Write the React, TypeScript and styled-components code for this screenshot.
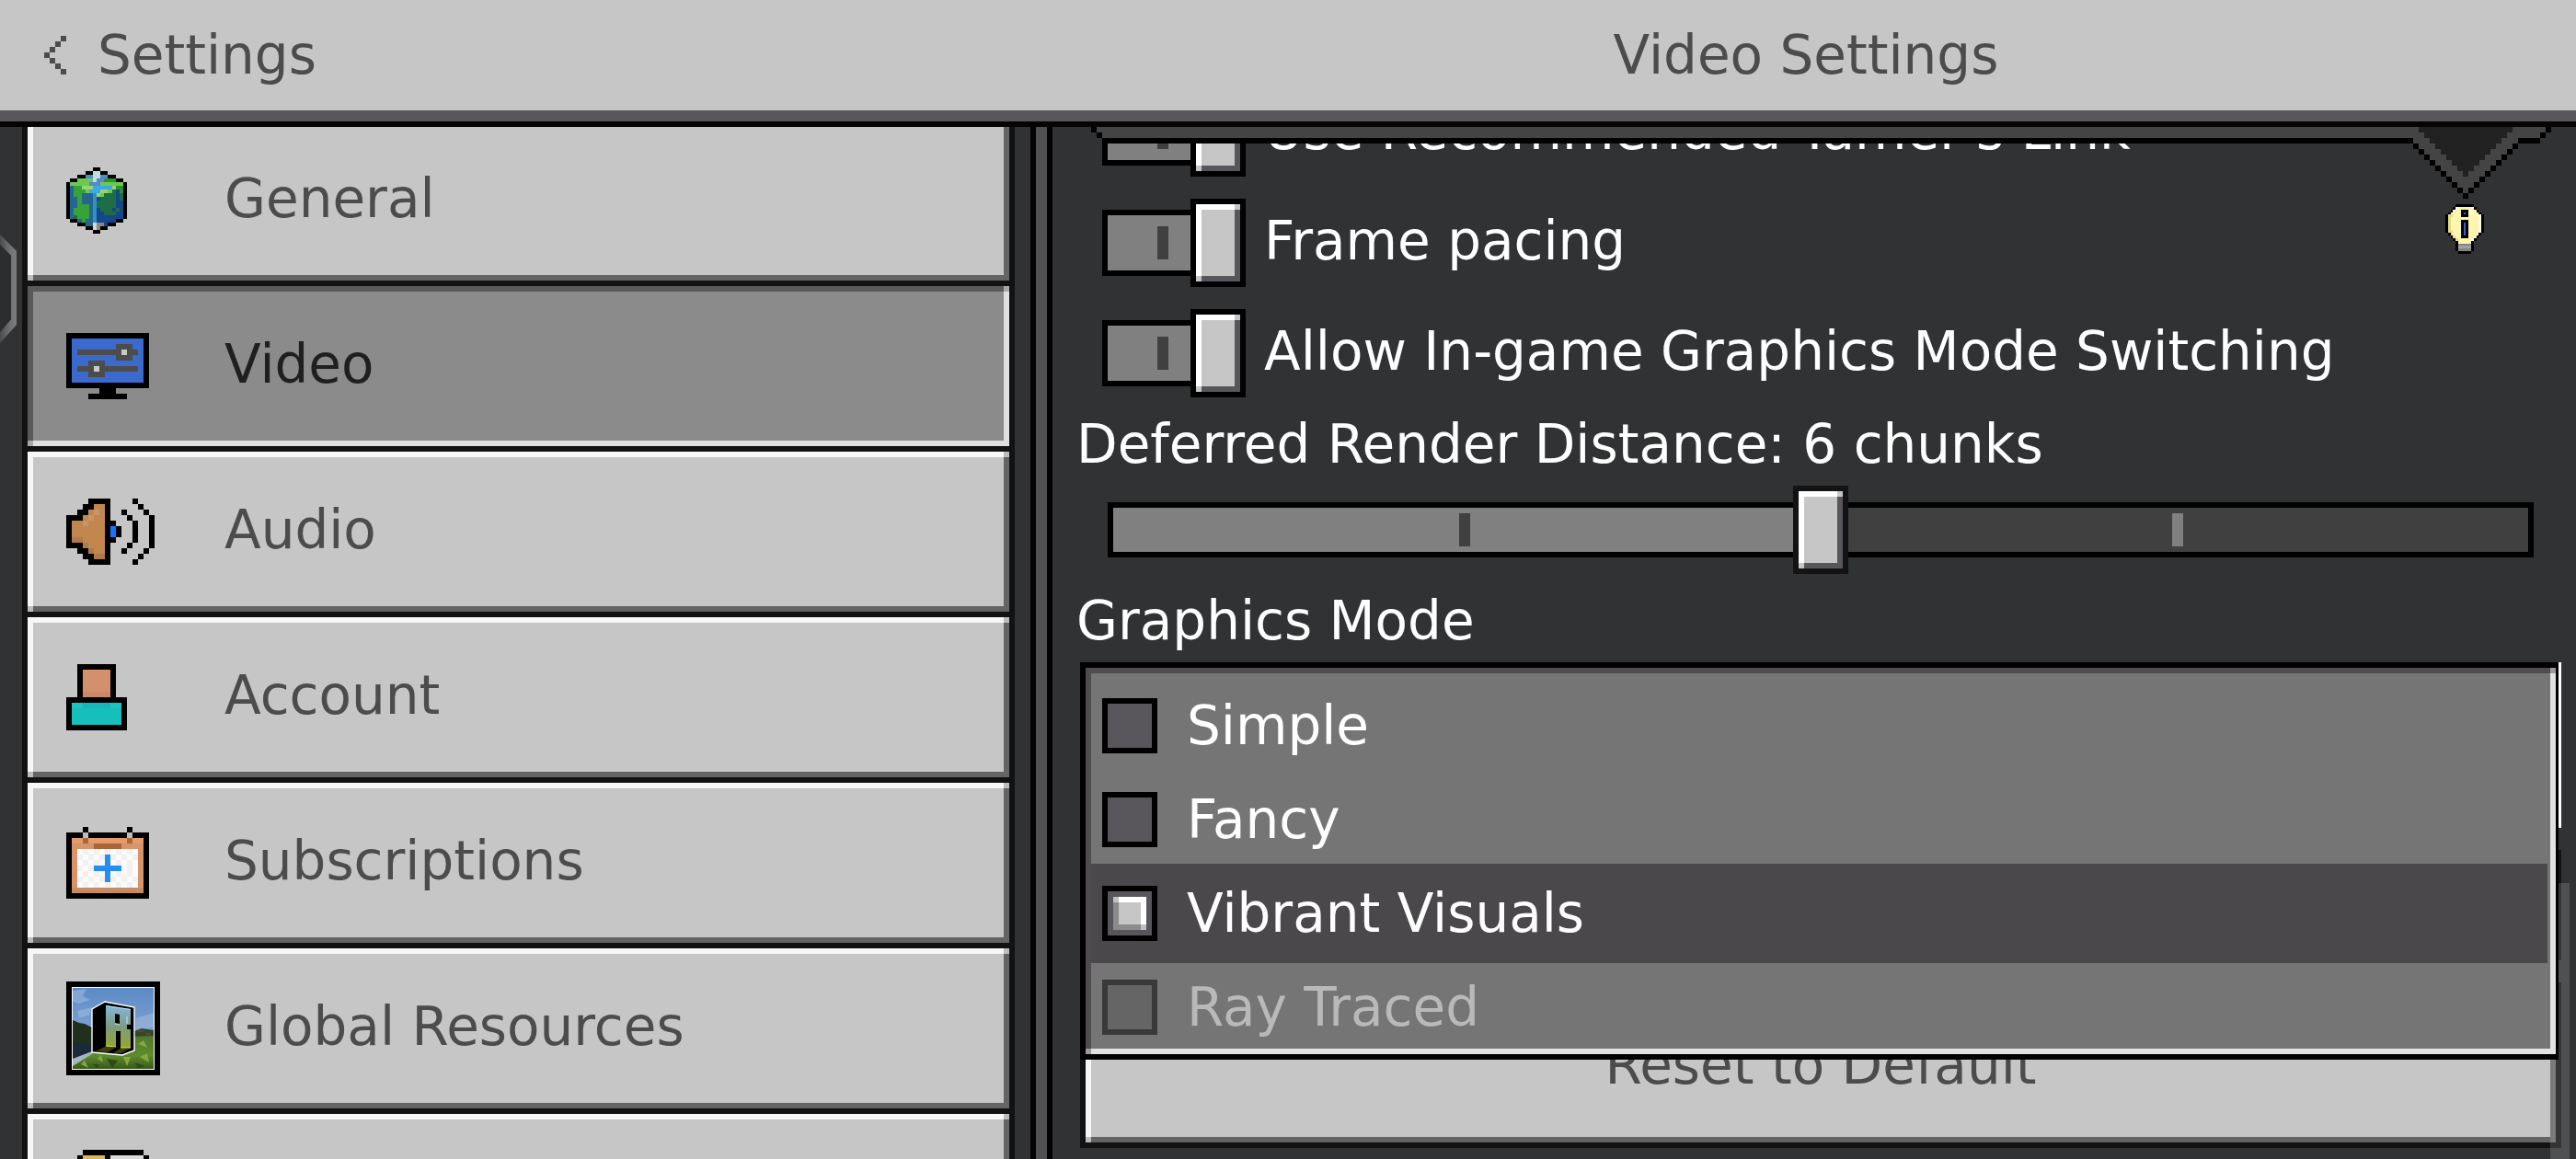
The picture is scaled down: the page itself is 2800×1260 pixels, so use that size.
import React, { useState } from "react";
import styled, { createGlobalStyle, css } from "styled-components";

const GlobalStyle = createGlobalStyle`
  *, *::before, *::after { box-sizing: border-box; }
  body {
    margin: 0;
    background: #313233;
    font-family: "DejaVu Sans", sans-serif;
    font-size: 58px;
    line-height: 60px;
    overflow: hidden;
  }
  button, input { font: inherit; margin: 0; border-radius: 0; }
`;

const px = (color: string, place: string, size: string) =>
  `linear-gradient(${color}, ${color}) ${place} / ${size} no-repeat`;

/* Two-tone 6px bevel with blended pixels where light meets dark. */
const bevel = (topLeft: string, bottomRight: string, blend: string, fill: string) => css`
  background:
    ${px(blend, "left bottom", "6px 6px")},
    ${px(blend, "right top", "6px 6px")},
    ${px(topLeft, "left top", "6px 100%")},
    ${px(topLeft, "left top", "100% 6px")},
    ${px(bottomRight, "right top", "6px 100%")},
    ${px(bottomRight, "left bottom", "100% 6px")},
    ${fill};
  background-origin: padding-box;
  background-clip: padding-box;
`;

const raised = bevel("#f7f7f7", "#646464", "#bcbcbc", "#c6c6c6");
const pressed = bevel("#5a595a", "#dfdfdf", "#a8a8a8", "#8b8b8b");
const knob = bevel("#ffffff", "#58565a", "#c6c6c6", "#c6c6c6");

/* ---------- page frame ---------- */

const Page = styled.div`
  display: flex;
  flex-direction: column;
  height: 100vh;
`;

const Header = styled.header`
  display: flex;
  align-items: center;
  height: 132px;
  flex: none;
  background: #c6c6c6;
  border-bottom: 12px solid #58565a;
  color: #4c4c4c;
`;

const BackArea = styled.div`
  width: 40%;
  padding-left: 48px;
`;

const BackButton = styled.button`
  display: flex;
  align-items: center;
  gap: 34px;
  padding: 0;
  border: 0;
  background: none;
  color: inherit;
`;

const Title = styled.h1`
  flex: 1;
  margin: 0;
  padding-left: 6px;
  text-align: center;
  font-size: inherit;
  font-weight: 400;
`;

const Body = styled.div`
  display: flex;
  flex: 1;
  min-height: 0;
  border-top: 6px solid #050505;
`;

/* ---------- sidebar ---------- */

const Sidebar = styled.nav`
  display: flex;
  align-items: flex-start;
  width: 40%;
  padding-right: 17px;
  overflow: hidden;
`;

const Gutter = styled.div`
  width: 24px;
  flex: none;
  padding-top: 117px;
`;

const SectionList = styled.div`
  display: flex;
  flex-direction: column;
  flex: 1;
  gap: 6px;
  margin-top: -13px;
  padding: 6px;
  background: #121212;
`;

const SectionButton = styled.button<{ $active: boolean }>`
  display: flex;
  align-items: center;
  height: 174px;
  padding: 0 0 0 42px;
  border: 0;
  text-align: left;
  color: ${(p) => (p.$active ? "#1f1f1f" : "#4c4c4c")};
  ${(p) => (p.$active ? pressed : raised)}
`;

const IconSlot = styled.span`
  display: flex;
  width: 172px;
`;

const Caption = styled.span`
  padding-bottom: 4px;
`;

const Divider = styled.div`
  flex: none;
  width: 24px;
  border: solid #030303;
  border-width: 0 6px;
  background: #505052;
`;

/* ---------- video panel ---------- */

const Panel = styled.main`
  position: relative;
  flex: 1;
  min-width: 0;
  overflow: hidden;
`;

const Scroller = styled.div`
  display: flex;
  flex-direction: column;
  margin-top: -54px;
  padding: 0 16px 0 30px;
  color: #ffffff;
`;

const ToggleRow = styled.label`
  display: flex;
  align-items: center;
  gap: 20px;
  height: 120px;
  padding-left: 24px;
`;

const Toggle = styled.input`
  appearance: none;
  display: flex;
  align-items: center;
  width: 156px;
  height: 96px;
  flex: none;

  &::before {
    content: "";
    flex: 1;
    height: 72px;
    border: 6px solid #000000;
    border-right: 0;
    background: ${px("#404040", "54px center", "12px 36px")}, #808080;
  }
  &::after {
    content: "";
    width: 60px;
    height: 96px;
    border: 6px solid #000000;
    ${knob}
  }
`;

const FieldLabel = styled.label`
  height: 78px;
  margin-left: -4px;
  line-height: 78px;
`;

const Slider = styled.input`
  appearance: none;
  height: 96px;
  margin: 6px 30px 12px;
  background: none;

  &::-webkit-slider-runnable-track {
    height: 60px;
    border: 6px solid #000000;
    background:
      ${px("#404040", "calc(25% - 6px) center", "12px 36px")},
      ${px("#808080", "calc(75% + 6px) center", "12px 36px")},
      ${px("#808080", "left top", "50% 100%")},
      #404040;
  }
  &::-webkit-slider-thumb {
    appearance: none;
    width: 60px;
    height: 96px;
    margin-top: -24px;
    border: 6px solid #131313;
    ${knob}
  }
`;

const Dropdown = styled.div`
  position: relative;
  margin-top: 6px;
  z-index: 2;
`;

const DropdownButton = styled.button`
  display: block;
  width: 100%;
  height: 180px;
  border: 0;
  background: #ffffff;
`;

const Menu = styled.div`
  position: absolute;
  top: 0;
  left: 0;
  right: 3px;
  padding: 12px 9px 6px 6px;
  border: 6px solid #000000;
  border-right-width: 3px;
  ${bevel("#4f4c50", "#e2e2e2", "#9c9a9c", "#757575")}
`;

const Option = styled.label<{ $selected: boolean; $disabled: boolean }>`
  display: flex;
  gap: 32px;
  padding: 21px 0 21px 12px;
  color: ${(p) => (p.$disabled ? "#b9b9b9" : "#ffffff")};
  ${(p) =>
    p.$selected &&
    css`
      background: #4a484b;
      box-shadow: 0 3px #4a484b, 0 -3px #4a484b;
    `}
  &:last-child { padding-bottom: 15px; }
`;

const Radio = styled.input`
  appearance: none;
  width: 60px;
  height: 60px;
  flex: none;
  padding: 6px;
  border: 6px solid #000000;
  background: #58565a;

  &:disabled {
    border-color: #393939;
    background: #656565;
  }
  &:checked::before {
    content: "";
    display: block;
    width: 36px;
    height: 36px;
    background:
      ${px("#c0c0c0", "left top", "6px 6px")},
      ${px("#c0c0c0", "right bottom", "6px 6px")},
      ${px("#ffffff", "left top", "100% 6px")},
      ${px("#ffffff", "right top", "6px 100%")},
      ${px("#8b8b8b", "left top", "6px 100%")},
      ${px("#8b8b8b", "left bottom", "100% 6px")},
      #c6c6c6;
  }
`;

const PlainButton = styled.button`
  height: 120px;
  margin-top: 24px;
  border: 0;
  background: #141414;
`;

const ResetButton = styled.button`
  height: 180px;
  margin-top: 24px;
  padding: 0;
  border: 6px solid #121212;
  color: #4c4c4c;
  ${raised}
`;

const ScrollThumb = styled.div`
  position: absolute;
  top: 822px;
  right: 7px;
  bottom: 0;
  width: 21px;
  z-index: 1;
  background: rgba(255, 255, 255, 0.15);
`;

const HintBubble = styled.div`
  position: absolute;
  top: 0;
  left: 42px;
  right: 27px;
  z-index: 3;
  display: flex;
  align-items: flex-start;
`;

const HintEdge = styled.div`
  flex: 1;
  height: 18px;
  background: #444444;
  border-bottom: 6px solid #000000;
`;

const HintBulb = styled.div`
  position: absolute;
  top: 84px;
  right: 100px;
  display: flex;
`;

/* ---------- pixel drawings ---------- */

type Palette = Record<string, string>;

function PixelArt({ rows, colors, width, height }: { rows: string[]; colors: Palette; width: number; height: number }) {
  const cells: React.ReactElement[] = [];
  rows.forEach((row, y) => {
    let x = 0;
    while (x < row.length) {
      let end = x + 1;
      while (end < row.length && row[end] === row[x]) end++;
      if (colors[row[x]]) {
        cells.push(<rect key={`${x}-${y}`} x={x} y={y} width={end - x} height={1} fill={colors[row[x]]} />);
      }
      x = end;
    }
  });
  return (
    <svg
      width={width}
      height={height}
      viewBox={`0 0 ${rows[0].length} ${rows.length}`}
      preserveAspectRatio="none"
      shapeRendering="crispEdges"
      aria-hidden="true"
    >
      {cells}
    </svg>
  );
}

const GLOBE = [
  "       kk       ",
  "     kkppkk     ",
  "   kkbbppbbkk   ",
  " kkLLLLpbbDDDkk ",
  "kLLLLLbbbLLLLLLk",
  "ktggyyycccccyDDk",
  "ktgggLcccyyLdnDk",
  "ktggtttCyLdddndk",
  "kttgtttCnddddndk",
  "kttgtttCdddddnnk",
  "kttgggtCdddddnnk",
  "ktggggtCndddndnk",
  "ktggggtCnndddnnk",
  "ktdgggtCnnnnnnnk",
  " kktgttCnnnnnkk ",
  "   kkttwaankk   ",
  "     kkwakk     ",
  "       kk       ",
];
const GLOBE_COLORS: Palette = {
  k: "#000", p: "#c3dcda", b: "#5487d0", L: "#6cc94f", D: "#2a9233", t: "#24668f", g: "#35a23a",
  y: "#9bd26c", c: "#3ba9e6", C: "#338fc4", d: "#1d6e46", n: "#12478a", w: "#d6d6d6", a: "#8d8782",
};

const MONITOR = [
  "kkkkkkkkkkkkkkk",
  "kbbbbbbbbbbbbbk",
  "kbbbbbbbbgggbbk",
  "kbggggggggwggbk",
  "kbbbbbbbbgggbbk",
  "kbbbgggbbbbbbbk",
  "kbgggwgggggggbk",
  "kbbbgggbbbbbbbk",
  "kbbbbbbbbbbbbbk",
  "kkkkkkkkkkkkkkk",
  "      kkk      ",
  "    kkkkkkk    ",
];
const MONITOR_COLORS: Palette = { k: "#000", b: "#3a6acd", g: "#4c4c4c", w: "#c9c9c9" };

const SPEAKER = [
  "    kkkk    k   ",
  "   kkook     k  ",
  "  kkohok  k   k ",
  "kkkohook   k   k",
  "koohoookk   k  k",
  "kooooookBk  k  k",
  "kooooookBk  k  k",
  "kssooookk   k  k",
  "kkksoook   k   k",
  "  kksook  k   k ",
  "   kkssk     k  ",
  "    kkkk    k   ",
];
const SPEAKER_COLORS: Palette = { k: "#000", o: "#c1874f", h: "#c89469", s: "#af7a48", B: "#1673ff" };

const PERSON = [
  "  kkkkkkk  ",
  "  ksssssk  ",
  "  ksssssk  ",
  "  ksssssk  ",
  "  ksssssk  ",
  "  kdddddk  ",
  "kkkkkkkkkkk",
  "kllTTTTTllk",
  "ktttttttttk",
  "ktttttttttk",
  "ktttttttttk",
  "kkkkkkkkkkk",
];
const PERSON_COLORS: Palette = { k: "#000", s: "#d3906d", d: "#cb8a66", l: "#19c4c1", T: "#17b8b6", t: "#16bfbc" };

const CALENDAR = [
  "   k       k   ",
  "kkkakkkkkkkakkk",
  "kOObOOOOOOObOOk",
  "koooobbbbbooook",
  "kowvwvwvwvwvwok",
  "kovwvwvBvwvwvok",
  "kowvwvwBwvwvwok",
  "kovwvBBBBBwvwok",
  "kowvwvwBwvwvwok",
  "kovwvwvBvwvwvok",
  "kowvwvwvwvwvwok",
  "kdddddddddddddk",
  "kkkkkkkkkkkkkkk",
];
const CALENDAR_COLORS: Palette = {
  k: "#000", a: "#bdbdbd", O: "#e39b6c", b: "#ab6538", o: "#d5946a", w: "#fbfbfb", v: "#f3f1f0", B: "#258ff0", d: "#c58b64",
};

const STORAGE = [
  "   kkkkkkkkkkk   ",
  ...Array.from({ length: 14 }, () => "  kggggkwwwwwwk  "),
  "   kkkkkkkkkkk   ",
];
const STORAGE_COLORS: Palette = { k: "#000", g: "#dbb559", w: "#dadada" };

const BULB = [
  "    kkkkkkk    ",
  "   kwyyyyyyk   ",
  "  kwyykkkwwyk  ",
  " kwyyykBkywyyk ",
  "kssyyykkkyyyywk",
  "ksyyyyyyyyyyywk",
  "ksyyyykkkyyyywk",
  "ksyyyykBkyyyywk",
  "ksyyyykBkyyyywk",
  "ksyyyykBkyyyywk",
  "kssyyykBkyyyywk",
  " ksyyykBkyyywk ",
  "  ksyykkkyyyk  ",
  "   ksyyyyywk   ",
  "    kyyyyyk    ",
  "    kdddddk    ",
  "    kgggggk    ",
  "    kdddddk    ",
  "     kkkkk     ",
];
const BULB_COLORS: Palette = { k: "#000", y: "#fff6ae", s: "#e2dc85", w: "#fffce6", B: "#3d62c9", g: "#a0a0a0", d: "#858585" };

/* The hint bubble's stepped left corner and its pointed tail. */
const BUBBLE_LEFT = ["kg", " k", "  "];
const BUBBLE_TAIL = Array.from({ length: 13 }, (_, r) =>
  Array.from({ length: 25 }, (_, x) => {
    if (x > r && x < 18 - r) return "d";
    if (r < 2) return x < 24 - r ? "g" : x === 24 - r ? "k" : " ";
    if (r === 2) return x < 19 ? "g" : x < 23 ? "k" : " ";
    if (x === r - 3 || x === 21 - r) return "k";
    return x > r - 3 && x < 21 - r ? "g" : " ";
  }).join("")
);
const BUBBLE_COLORS: Palette = { k: "#000", g: "#444444", d: "#212121" };

const CHEVRON = ["   k", "  k ", " k  ", "k   ", " k  ", "  k ", "   k"];

function EdgeHandle() {
  return (
    <svg width="24" height="118" viewBox="0 0 24 118" aria-hidden="true">
      <defs>
        <linearGradient id="handle" x1="0" x2="1" y1="0" y2="0">
          <stop offset="0" stopColor="#4a4b4c" />
          <stop offset="0.6" stopColor="#707173" />
          <stop offset="1" stopColor="#7c7d7f" />
        </linearGradient>
      </defs>
      <path d="M0 0 L18 18 V98 L0 118 V106 L12 92 V23 L0 11 Z" fill="url(#handle)" />
      <path d="M0 11 L12 23 V92 L0 106 Z" fill="#2c2d2e" />
    </svg>
  );
}

function ResourcesIcon() {
  return (
    <svg width="102" height="102" viewBox="0 0 102 102" aria-hidden="true">
      <defs>
        <linearGradient id="sky" x1="0" x2="0" y1="0" y2="1">
          <stop offset="0" stopColor="#5b8ac4" />
          <stop offset="0.5" stopColor="#7ba1d2" />
          <stop offset="1" stopColor="#a9c0e0" />
        </linearGradient>
        <linearGradient id="grass" x1="0" x2="0" y1="0" y2="1">
          <stop offset="0" stopColor="#4f7a2c" />
          <stop offset="0.6" stopColor="#5f8a2c" />
          <stop offset="1" stopColor="#39591c" />
        </linearGradient>
        <linearGradient id="face" x1="0" x2="0" y1="0" y2="1">
          <stop offset="0" stopColor="#86b8dc" />
          <stop offset="0.5" stopColor="#7c9c82" />
          <stop offset="1" stopColor="#97a52c" />
        </linearGradient>
      </defs>
      <rect width="102" height="102" fill="#000" />
      <rect x="6" y="6" width="90" height="90" fill="#fff" />
      <rect x="7" y="7" width="88" height="88" fill="url(#sky)" />
      <path d="M7 10 L22 8 L18 16 L26 20 L14 24 L7 22 Z M12 32 L28 28 L26 36 L14 40 Z M76 40 L95 34 V50 L76 52 Z" fill="#9cb7dc" opacity="0.6" />
      <path d="M7 42 L14 45 L20 46 L28 50 V78 H7 Z" fill="#20301f" />
      <path d="M74 54 L82 51 L95 53 V64 H74 Z" fill="#33482a" />
      <path d="M78 53 H84 V55 H78 Z M86 56 H92 V58 H86 Z" fill="#6d4130" />
      <path d="M74 60 L95 59 V95 H7 V90 L28 78 Z" fill="url(#grass)" />
      <path d="M7 66 L28 68 V78 L7 90 Z" fill="#1b2a38" />
      <path d="M7 84 L28 76 V79 L7 92 Z" fill="#a3b7bd" />
      <path d="M34 84 L38 80 L40 88 Z M62 82 L66 92 L70 82 Z M78 68 L84 64 L88 72 Z M16 90 L20 86 L24 94 Z M80 82 L88 78 L90 88 Z" fill="#86a83c" />
      <path d="M44 84 L50 94 L56 86 Z M74 88 L78 94 L86 92 Z M28 90 L34 94 L36 90 Z" fill="#2e4a17" />
      <path d="M28 30 L42 22 L74 28 V75 L61 80 L28 77 Z" fill="#000" stroke="#fff" strokeWidth="1.4" />
      <path d="M32 76 L44 70 L53 72 L45 77 Z M51 78 L60 72 L69 73 L60 78 Z" fill="#3a4013" />
      <path d="M43 26 L70 30 V72 H59 V54 H54 V71 L43 70 Z" fill="url(#face)" />
      <path d="M53 35 L58 36 V46 L53 45 Z M66 47 H71 V52 H66 Z" fill="#000" />
      <path d="M43 26.5 L70 30.5 M66 46 V38 M53 46 L58 47" stroke="#b6dcf2" strokeWidth="1.2" fill="none" />
      <path d="M43 70 L54 71 M59 72 H70" stroke="#dce84e" strokeWidth="1.2" />
    </svg>
  );
}

/* ---------- data ---------- */

interface Section {
  name: string;
  icon: React.ReactElement;
  captioned?: boolean;
}

const SECTIONS: Section[] = [
  { name: "General", icon: <PixelArt rows={GLOBE} colors={GLOBE_COLORS} width={66} height={72} /> },
  { name: "Video", icon: <PixelArt rows={MONITOR} colors={MONITOR_COLORS} width={90} height={72} /> },
  { name: "Audio", icon: <PixelArt rows={SPEAKER} colors={SPEAKER_COLORS} width={96} height={72} /> },
  { name: "Account", icon: <PixelArt rows={PERSON} colors={PERSON_COLORS} width={66} height={72} /> },
  { name: "Subscriptions", icon: <PixelArt rows={CALENDAR} colors={CALENDAR_COLORS} width={90} height={78} /> },
  { name: "Global Resources", icon: <ResourcesIcon /> },
  { name: "Storage", icon: <PixelArt rows={STORAGE} colors={STORAGE_COLORS} width={102} height={96} />, captioned: false },
];

const TOGGLES = ["Use Recommended Tamer's Link", "Frame pacing", "Allow In-game Graphics Mode Switching"];

const MODES = [
  { name: "Simple" },
  { name: "Fancy" },
  { name: "Vibrant Visuals" },
  { name: "Ray Traced", disabled: true },
];

export default function App() {
  const [section, setSection] = useState("Video");
  const [mode, setMode] = useState("Vibrant Visuals");
  const [distance, setDistance] = useState(6);

  return (
    <Page>
      <GlobalStyle />
      <Header>
        <BackArea>
          <BackButton>
            <PixelArt rows={CHEVRON} colors={{ k: "#4c4c4c" }} width={24} height={42} />
            Settings
          </BackButton>
        </BackArea>
        <Title>Video Settings</Title>
      </Header>
      <Body>
        <Sidebar>
          <Gutter>
            <EdgeHandle />
          </Gutter>
          <SectionList>
            {SECTIONS.map((s) => (
              <SectionButton
                key={s.name}
                $active={s.name === section}
                aria-label={s.name}
                onClick={() => setSection(s.name)}
              >
                <IconSlot>{s.icon}</IconSlot>
                {s.captioned !== false && <Caption>{s.name}</Caption>}
              </SectionButton>
            ))}
          </SectionList>
        </Sidebar>
        <Divider />
        <Panel>
          <Scroller>
            {TOGGLES.map((t) => (
              <ToggleRow key={t}>
                <Toggle type="checkbox" defaultChecked />
                <Caption>{t}</Caption>
              </ToggleRow>
            ))}
            <FieldLabel htmlFor="distance">Deferred Render Distance: {distance} chunks</FieldLabel>
            <Slider
              id="distance"
              type="range"
              min={4}
              max={8}
              value={distance}
              onChange={(e) => setDistance(Number(e.target.value))}
            />
            <FieldLabel as="div" id="mode-label">Graphics Mode</FieldLabel>
            <Dropdown>
              <DropdownButton aria-labelledby="mode-label" aria-expanded="true" />
              <Menu role="radiogroup" aria-labelledby="mode-label">
                {MODES.map((m) => (
                  <Option key={m.name} $selected={m.name === mode} $disabled={!!m.disabled}>
                    <Radio
                      type="radio"
                      name="mode"
                      disabled={m.disabled}
                      checked={m.name === mode}
                      onChange={() => setMode(m.name)}
                    />
                    {m.name}
                  </Option>
                ))}
              </Menu>
            </Dropdown>
            <PlainButton aria-label="Advanced options" />
            <ResetButton>
              <Caption>Reset to Default</Caption>
            </ResetButton>
          </Scroller>
          <ScrollThumb />
          <HintBubble>
            <PixelArt rows={BUBBLE_LEFT} colors={BUBBLE_COLORS} width={12} height={18} />
            <HintEdge />
            <PixelArt rows={BUBBLE_TAIL} colors={BUBBLE_COLORS} width={150} height={78} />
          </HintBubble>
          <HintBulb>
            <PixelArt rows={BULB} colors={BULB_COLORS} width={42} height={54} />
          </HintBulb>
        </Panel>
      </Body>
    </Page>
  );
}
